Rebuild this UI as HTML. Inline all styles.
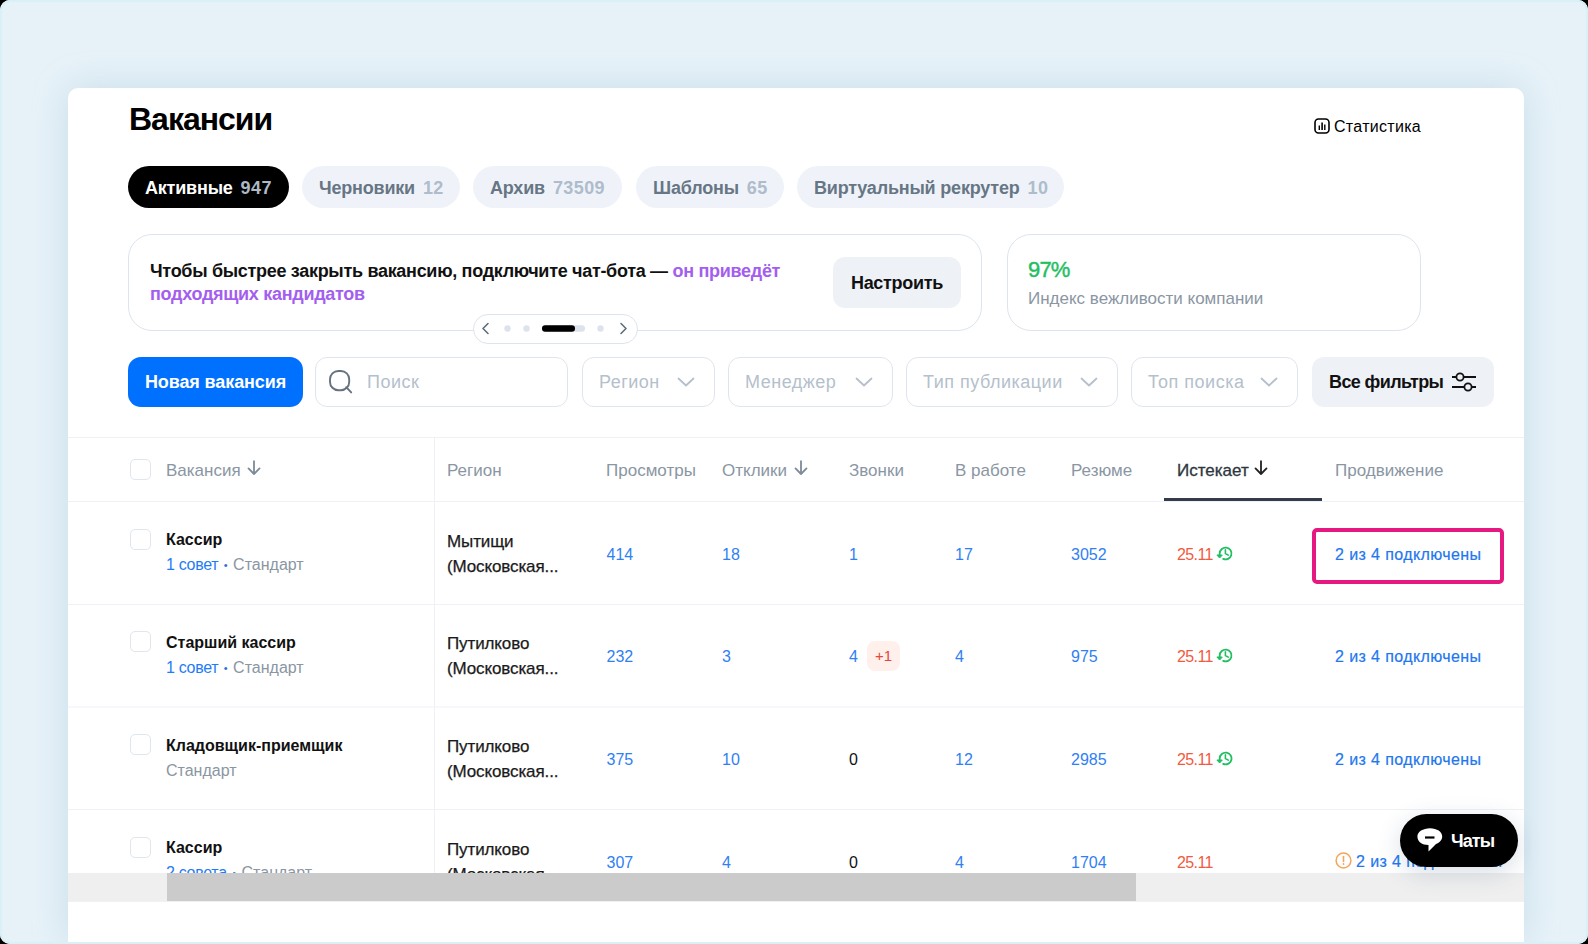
<!DOCTYPE html>
<html><head><meta charset="utf-8">
<style>
*{box-sizing:border-box;margin:0;padding:0}
html,body{width:1588px;height:944px;overflow:hidden;background:#000;font-family:"Liberation Sans",sans-serif}
#frame{position:absolute;left:0;top:0;width:1588px;height:944px;border-radius:10px;background:#e7f2f8;box-shadow:inset 0 0 0 2px #d9f0f7;overflow:hidden}
#card{position:absolute;left:68px;top:88px;width:1456px;height:854px;background:#fff;border-radius:10px 10px 0 0;box-shadow:0 0 36px rgba(120,170,205,.28);overflow:hidden}
.a{position:absolute;white-space:nowrap}
h1{position:absolute;left:61px;top:11px;font-size:32px;font-weight:bold;letter-spacing:-1px;color:#000;line-height:40px}
.stat{position:absolute;left:1246px;top:28px;font-size:16px;color:#000;line-height:20px;display:flex;align-items:center;letter-spacing:.3px}
.tab{position:absolute;top:78px;height:42px;border-radius:21px;background:#eff3f9;display:flex;align-items:center;padding:2px 17px 0;font-size:18px;font-weight:bold;color:#677685;gap:8px;letter-spacing:-0.2px;white-space:nowrap}
.tab .n{color:#aebccb;font-weight:bold;letter-spacing:.4px}
.tab.on{background:#000;color:#fff}
.tab.on .n{color:#aeb9c6}
.banner{position:absolute;top:146px;height:97px;border:1px solid #dde4ed;border-radius:24px;background:#fff}
.btn{position:absolute;display:flex;align-items:center;justify-content:center;font-weight:bold;font-size:18px;border-radius:12px;white-space:nowrap}
.inp{position:absolute;top:269px;height:50px;border:1px solid #dfe5ee;border-radius:12px;display:flex;align-items:center;font-size:18px;color:#b4c0cc;white-space:nowrap;padding-left:16px;letter-spacing:.5px}
.inp svg{position:absolute;top:19px}
.hd{position:absolute;top:373px;font-size:17px;line-height:20px;color:#8a96a3;white-space:nowrap}
.hline{position:absolute;left:0;width:1456px;height:1px;background:#eef2f7}
.cb{position:absolute;left:62px;width:21px;height:21px;border:1px solid #dfe6ee;border-radius:5px;background:#fff}
.ttl{position:absolute;left:98px;font-size:16px;font-weight:bold;line-height:20px;color:#111;white-space:nowrap}
.sub{position:absolute;left:98px;font-size:16px;line-height:20px;color:#8a96a3;white-space:nowrap}
.sub b{font-weight:normal;color:#1f7cf5;letter-spacing:-.3px}.sub i{font-style:normal;color:#2a6fd8;font-size:11px;position:relative;top:-1px;margin:0 1px}
.reg{position:absolute;left:379px;font-size:17px;line-height:25px;-webkit-text-stroke:.25px #1a1a1a;letter-spacing:-.12px;color:#1a1a1a;white-space:nowrap}
.num{position:absolute;font-size:16px;line-height:20px;color:#2f80f5;white-space:nowrap}
.exp{position:absolute;left:1109px;font-size:16px;line-height:20px;color:#f25a40;white-space:nowrap;letter-spacing:-.6px}
.prom{position:absolute;left:1267px;font-size:16px;line-height:20px;color:#2277ee;white-space:nowrap;letter-spacing:.4px;-webkit-text-stroke:.2px #2277ee}
</style></head>
<body>
<div id="frame">
<div id="card">
  <h1>Вакансии</h1>
  <div class="stat"><svg width="16" height="16" viewBox="0 0 16 16" style="margin-right:4px"><rect x="1" y="1" width="14" height="14" rx="3.5" fill="none" stroke="#000" stroke-width="1.6"/><rect x="4.6" y="7.5" width="1.4" height="4.5" fill="#000"/><rect x="7.3" y="4.5" width="1.6" height="7.5" fill="#000"/><rect x="10.1" y="6.5" width="1.4" height="5.5" fill="#000"/></svg><span style="position:relative;top:1px">Статистика</span></div>

  <div class="tab on" style="left:60px;width:161px">Активные<span class="n">947</span></div>
  <div class="tab" style="left:234px;width:158px">Черновики<span class="n">12</span></div>
  <div class="tab" style="left:405px;width:149px">Архив<span class="n">73509</span></div>
  <div class="tab" style="left:568px;width:148px">Шаблоны<span class="n">65</span></div>
  <div class="tab" style="left:729px;width:267px">Виртуальный рекрутер<span class="n">10</span></div>

  <div class="banner" style="left:60px;width:854px"></div>
  <div class="a" style="left:82px;top:171.5px;font-size:18px;line-height:23px;font-weight:bold;color:#111;letter-spacing:-.3px">Чтобы быстрее закрыть вакансию, подключите чат-бота — <span style="color:#a35ef0">он приведёт</span><br><span style="color:#a35ef0">подходящих кандидатов</span></div>
  <div class="btn" style="left:765px;top:169px;width:128px;height:51px;background:#eef2f7;color:#111;letter-spacing:-.3px;padding-top:1.5px">Настроить</div>

  <div class="banner" style="left:939px;width:414px"></div>
  <div class="a" style="left:960px;top:169px;font-size:22px;line-height:26px;font-weight:normal;color:#1fbf62;letter-spacing:-.8px;-webkit-text-stroke:.45px #1fbf62">97%</div>
  <div class="a" style="left:960px;top:201px;font-size:17px;line-height:20px;color:#8a96a3">Индекс вежливости компании</div>

  <!-- carousel -->
  <div class="a" style="left:405px;top:226px;width:165px;height:30px;border:1px solid #dde4ed;border-radius:15px;background:#fff">
    <svg width="163" height="29" viewBox="0 0 163 29" style="position:absolute;left:-1px;top:-1px">
      <path d="M15 9.5 L10 14.5 L15 19.5" fill="none" stroke="#5f6d7c" stroke-width="1.6" stroke-linecap="round" stroke-linejoin="round"/>
      <circle cx="34.5" cy="14.5" r="3.2" fill="#dde3ec"/>
      <circle cx="53.5" cy="14.5" r="3.2" fill="#dde3ec"/>
      <rect x="69" y="11.3" width="43" height="6.4" rx="3.2" fill="#dde3ec"/>
      <rect x="69" y="11.3" width="33" height="6.4" rx="3.2" fill="#000"/>
      <circle cx="127.5" cy="14.5" r="3.2" fill="#dde3ec"/>
      <path d="M148 9.5 L153 14.5 L148 19.5" fill="none" stroke="#5f6d7c" stroke-width="1.6" stroke-linecap="round" stroke-linejoin="round"/>
    </svg>
  </div>

  <!-- filters -->
  <div class="btn" style="left:60px;top:269px;width:175px;height:50px;background:#0070ff;color:#fff;letter-spacing:-.1px;border-radius:13px">Новая вакансия</div>
  <div class="inp" style="left:247px;width:253px;padding-left:51px;letter-spacing:.5px">Поиск
    <svg width="24" height="24" viewBox="0 0 24 24" style="left:13px;top:12px"><rect x="1" y="1" width="19.2" height="19.2" rx="8.3" fill="none" stroke="#66727f" stroke-width="1.9"/><path d="M17.2 17.2 L22.2 22.4" stroke="#66727f" stroke-width="1.9" stroke-linecap="round"/></svg></div>
  <div class="inp" style="left:514px;width:133px">Регион<svg width="18" height="10" viewBox="0 0 18 10" style="left:93.5px"><path d="M1.5 1.5 L9 8.5 L16.5 1.5" fill="none" stroke="#b4c0cc" stroke-width="1.8" stroke-linecap="round" stroke-linejoin="round"/></svg></div>
  <div class="inp" style="left:660px;width:165px">Менеджер<svg width="18" height="10" viewBox="0 0 18 10" style="left:126px"><path d="M1.5 1.5 L9 8.5 L16.5 1.5" fill="none" stroke="#b4c0cc" stroke-width="1.8" stroke-linecap="round" stroke-linejoin="round"/></svg></div>
  <div class="inp" style="left:838px;width:212px">Тип публикации<svg width="18" height="10" viewBox="0 0 18 10" style="left:173px"><path d="M1.5 1.5 L9 8.5 L16.5 1.5" fill="none" stroke="#b4c0cc" stroke-width="1.8" stroke-linecap="round" stroke-linejoin="round"/></svg></div>
  <div class="inp" style="left:1063px;width:167px">Топ поиска<svg width="18" height="10" viewBox="0 0 18 10" style="left:128px"><path d="M1.5 1.5 L9 8.5 L16.5 1.5" fill="none" stroke="#b4c0cc" stroke-width="1.8" stroke-linecap="round" stroke-linejoin="round"/></svg></div>
  <div class="btn" style="left:1244px;top:269px;width:182px;height:50px;background:#eef2f7;color:#111;justify-content:flex-start;padding-left:17px;letter-spacing:-.6px">Все фильтры
    <svg width="26" height="22" viewBox="0 0 26 22" style="position:absolute;left:139px;top:14px"><path d="M1 6 H25 M1 16 H25" stroke="#111" stroke-width="1.8"/><circle cx="9" cy="6" r="3.6" fill="#eef2f7" stroke="#111" stroke-width="1.8"/><circle cx="17" cy="16" r="3.6" fill="#eef2f7" stroke="#111" stroke-width="1.8"/></svg></div>

  <!-- table -->
<div id="tbl" style="position:absolute;left:0;top:0;width:1456px;height:785px;overflow:hidden">
<div class="hline" style="top:349px"></div>
<div class="hline" style="top:413px"></div>
<div class="hline" style="top:516px"></div>
<div class="hline" style="top:618px;opacity:.5"></div><div class="hline" style="top:619px;opacity:.5"></div>
<div class="hline" style="top:721px"></div>
<div class="a" style="left:366px;top:349px;width:1px;height:440px;background:#eef2f7"></div>
<div class="cb" style="top:371px"></div>
<div class="hd" style="left:98px">Вакансия</div>
<div class="hd" style="left:379px">Регион</div>
<div class="hd" style="left:538px">Просмотры</div>
<div class="hd" style="left:654px">Отклики</div>
<div class="hd" style="left:781px">Звонки</div>
<div class="hd" style="left:887px">В работе</div>
<div class="hd" style="left:1003px">Резюме</div>
<div class="hd" style="left:1109px;color:#2d3640;-webkit-text-stroke:.3px #2d3640">Истекает</div>
<div class="hd" style="left:1267px">Продвижение</div>
<svg class="a" width="14" height="16" viewBox="0 0 14 16" style="left:179px;top:372px"><path d="M7 1.2 V14 M1.5 8.4 L7 14 L12.5 8.4" fill="none" stroke="#7d8a97" stroke-width="1.8" stroke-linecap="round" stroke-linejoin="round"/></svg>
<svg class="a" width="14" height="16" viewBox="0 0 14 16" style="left:726px;top:372px"><path d="M7 1.2 V14 M1.5 8.4 L7 14 L12.5 8.4" fill="none" stroke="#7d8a97" stroke-width="1.8" stroke-linecap="round" stroke-linejoin="round"/></svg>
<svg class="a" width="14" height="16" viewBox="0 0 14 16" style="left:1186px;top:372px"><path d="M7 1.2 V14 M1.5 8.4 L7 14 L12.5 8.4" fill="none" stroke="#222" stroke-width="1.8" stroke-linecap="round" stroke-linejoin="round"/></svg>
<div class="a" style="left:1096px;top:410px;width:158px;height:3px;background:#333c48"></div>
<div class="cb" style="top:440.50px"></div>
<div class="ttl" style="top:442.20px">Кассир</div>
<div class="sub" style="top:467.30px"><b>1 совет</b> <i>•</i> Стандарт</div>
<div class="reg" style="top:440.50px">Мытищи<br>(Московская...</div>
<div class="num" style="left:538.5px;top:456.60px">414</div>
<div class="num" style="left:654px;top:456.60px">18</div>
<div class="num" style="left:781px;top:456.60px">1</div>
<div class="num" style="left:887px;top:456.60px">17</div>
<div class="num" style="left:1003px;top:456.60px">3052</div>
<div class="exp" style="top:456.60px">25.11</div>
<div class="a" style="left:1146px;top:456.50px"><svg class="hist" width="20" height="18" viewBox="0 0 20 18"><path d="M9.2 13.9 A5.9 5.9 0 1 0 5.7 8.4 L5.6 11" fill="none" stroke="#1fbf62" stroke-width="1.8" stroke-linecap="round"/><path d="M2.9 10 L8.3 10 L5.6 13 Z" fill="#1fbf62" stroke="#1fbf62" stroke-width="1" stroke-linejoin="round"/><path d="M11.4 4.9 V8.5 L14.3 10.1" fill="none" stroke="#1fbf62" stroke-width="1.6" stroke-linecap="round" stroke-linejoin="round"/></svg></div>
<div class="prom" style="top:456.60px">2 из 4 подключены</div>
<div class="cb" style="top:543.17px"></div>
<div class="ttl" style="top:544.87px">Старший кассир</div>
<div class="sub" style="top:569.97px"><b>1 совет</b> <i>•</i> Стандарт</div>
<div class="reg" style="top:543.17px">Путилково<br>(Московская...</div>
<div class="num" style="left:538.5px;top:559.27px">232</div>
<div class="num" style="left:654px;top:559.27px">3</div>
<div class="num" style="left:781px;top:559.27px">4</div>
<div class="num" style="left:887px;top:559.27px">4</div>
<div class="num" style="left:1003px;top:559.27px">975</div>
<div class="a" style="left:799px;top:553.00px;width:33px;height:30px;border-radius:8px;background:#fff0ec;color:#e8453a;font-size:15px;line-height:30px;text-align:center">+1</div>
<div class="exp" style="top:559.27px">25.11</div>
<div class="a" style="left:1146px;top:559.17px"><svg class="hist" width="20" height="18" viewBox="0 0 20 18"><path d="M9.2 13.9 A5.9 5.9 0 1 0 5.7 8.4 L5.6 11" fill="none" stroke="#1fbf62" stroke-width="1.8" stroke-linecap="round"/><path d="M2.9 10 L8.3 10 L5.6 13 Z" fill="#1fbf62" stroke="#1fbf62" stroke-width="1" stroke-linejoin="round"/><path d="M11.4 4.9 V8.5 L14.3 10.1" fill="none" stroke="#1fbf62" stroke-width="1.6" stroke-linecap="round" stroke-linejoin="round"/></svg></div>
<div class="prom" style="top:559.27px">2 из 4 подключены</div>
<div class="cb" style="top:645.83px"></div>
<div class="ttl" style="top:647.53px">Кладовщик-приемщик</div>
<div class="sub" style="top:672.63px">Стандарт</div>
<div class="reg" style="top:645.83px">Путилково<br>(Московская...</div>
<div class="num" style="left:538.5px;top:661.93px">375</div>
<div class="num" style="left:654px;top:661.93px">10</div>
<div class="num" style="left:781px;top:661.93px;color:#111">0</div>
<div class="num" style="left:887px;top:661.93px">12</div>
<div class="num" style="left:1003px;top:661.93px">2985</div>
<div class="exp" style="top:661.93px">25.11</div>
<div class="a" style="left:1146px;top:661.83px"><svg class="hist" width="20" height="18" viewBox="0 0 20 18"><path d="M9.2 13.9 A5.9 5.9 0 1 0 5.7 8.4 L5.6 11" fill="none" stroke="#1fbf62" stroke-width="1.8" stroke-linecap="round"/><path d="M2.9 10 L8.3 10 L5.6 13 Z" fill="#1fbf62" stroke="#1fbf62" stroke-width="1" stroke-linejoin="round"/><path d="M11.4 4.9 V8.5 L14.3 10.1" fill="none" stroke="#1fbf62" stroke-width="1.6" stroke-linecap="round" stroke-linejoin="round"/></svg></div>
<div class="prom" style="top:661.93px">2 из 4 подключены</div>
<div class="cb" style="top:748.50px"></div>
<div class="ttl" style="top:750.20px">Кассир</div>
<div class="sub" style="top:775.30px"><b>2 совета</b> <i>•</i> Стандарт</div>
<div class="reg" style="top:748.50px">Путилково<br>(Московская...</div>
<div class="num" style="left:538.5px;top:764.60px">307</div>
<div class="num" style="left:654px;top:764.60px">4</div>
<div class="num" style="left:781px;top:764.60px;color:#111">0</div>
<div class="num" style="left:887px;top:764.60px">4</div>
<div class="num" style="left:1003px;top:764.60px">1704</div>
<div class="exp" style="top:764.60px">25.11</div>
<svg class="a" width="17" height="17" viewBox="0 0 17 17" style="left:1267px;top:764.00px"><circle cx="8.5" cy="8.5" r="7.4" fill="none" stroke="#f5a55a" stroke-width="1.5"/><path d="M8.5 4.6 V9.4" stroke="#f5a55a" stroke-width="1.6" stroke-linecap="round"/><circle cx="8.5" cy="12" r=".9" fill="#f5a55a"/></svg>
<div class="prom" style="left:1288px;top:763.60px">2 из 4 подключены</div>
<div class="a" style="left:1244px;top:440px;width:192px;height:56px;border:4px solid #e5197f;border-radius:5px"></div>
</div>
<div class="a" style="left:0;top:785px;width:1456px;height:28px;background:#efefef"></div>
<div class="a" style="left:99px;top:785px;width:969px;height:28px;background:#cbcbcb"></div>
<div class="hline" style="top:813px"></div>
</div>
<div class="a" style="left:1400px;top:814px;width:118px;height:53px;border-radius:27px;background:#000;box-shadow:0 6px 24px rgba(40,70,110,.18)"><svg width="28" height="26" viewBox="0 0 28 26" style="position:absolute;left:16px;top:13px"><path d="M14 1.2 C21 1.2 26.2 4.8 26.2 9.4 C26.2 13 23.5 15.4 20 17 L12.5 24.5 L12.5 17.9 C6 17.9 1.4 14.5 1.4 9.4 C1.4 4.8 7 1.2 14 1.2 Z" fill="#fff"/><path d="M9 10.5 H18.5" stroke="#000" stroke-width="2.2"/></svg><div class="a" style="left:51px;top:16px;font-size:18px;line-height:22px;font-weight:bold;color:#fff;letter-spacing:-.9px">Чаты</div></div>
<div style="position:absolute;left:0;top:0;width:1588px;height:944px;border:2px solid #d9f0f7;border-radius:10px;pointer-events:none"></div>
</div>
</body></html>
